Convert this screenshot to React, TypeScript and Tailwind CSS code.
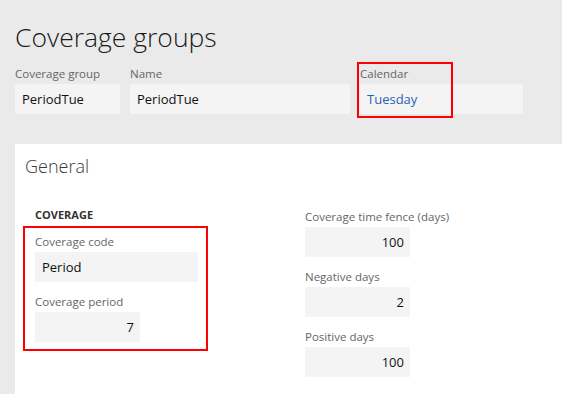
import React from "react";

const font = { fontFamily: '"Segoe UI", "Open Sans", sans-serif' };

function Field({
  label,
  value,
  width,
  align = "left",
  blue = false,
}: {
  label: string;
  value: string;
  width: string;
  align?: "left" | "right";
  blue?: boolean;
}) {
  return (
    <div className="flex flex-col">
      <div className="h-[16px] leading-[16px] text-[11.5px] text-[#666666] whitespace-nowrap">{label}</div>
      <div
        className={`mt-[2px] h-[30px] leading-[30px] bg-[#f4f4f4] text-[13px] px-[7px] ${width} ${
          align === "right" ? "text-right pr-[6px]" : ""
        } ${blue ? "text-[#2b62b2]" : "text-[#111111]"}`}
      >
        {value}
      </div>
    </div>
  );
}

export default function App() {
  return (
    <div className="w-[562px] h-[394px] overflow-hidden bg-[#eaeaea] flex flex-col" style={font}>
      <div className="pl-[15px] pt-[19px] h-[56px] leading-[36px] text-[26.5px] font-light text-[#1b1b1b] whitespace-nowrap">
        Coverage groups
      </div>
      <div className="pl-[15px] mt-[10px] flex gap-[10px]">
        <Field label="Coverage group" value="PeriodTue" width="w-[105px]" />
        <Field label="Name" value="PeriodTue" width="w-[220px]" />
        <div className="relative">
          <Field label="Calendar" value="Tuesday" width="w-[163px]" blue />
          <div className="absolute left-[-3px] top-[-4px] w-[96px] h-[56px] border-2 border-[#ff0000]" />
        </div>
      </div>
      <div className="ml-[15px] mt-[30px] flex-1 bg-white pl-[10px] pt-[10px]">
        <div className="h-[24px] leading-[24px] text-[18px] font-light text-[#3a3a3a]">General</div>
        <div className="mt-[29px] pl-[10px] flex">
          <div className="w-[270px] flex flex-col">
            <div className="h-[16px] leading-[16px] text-[11px] font-bold text-[#333333]">COVERAGE</div>
            <div className="mt-[3px] -ml-[12px] w-[185px] border-2 border-[#ff0000] pl-[10px] pt-[6px] pb-[7px] flex flex-col gap-[12px]">
              <Field label="Coverage code" value="Period" width="w-[163px]" />
              <Field label="Coverage period" value="7" width="w-[105px]" align="right" />
            </div>
          </div>
          <div className="pt-[2px] flex flex-col gap-[12px]">
            <Field label="Coverage time fence (days)" value="100" width="w-[105px]" align="right" />
            <Field label="Negative days" value="2" width="w-[105px]" align="right" />
            <Field label="Positive days" value="100" width="w-[105px]" align="right" />
          </div>
        </div>
      </div>
    </div>
  );
}
